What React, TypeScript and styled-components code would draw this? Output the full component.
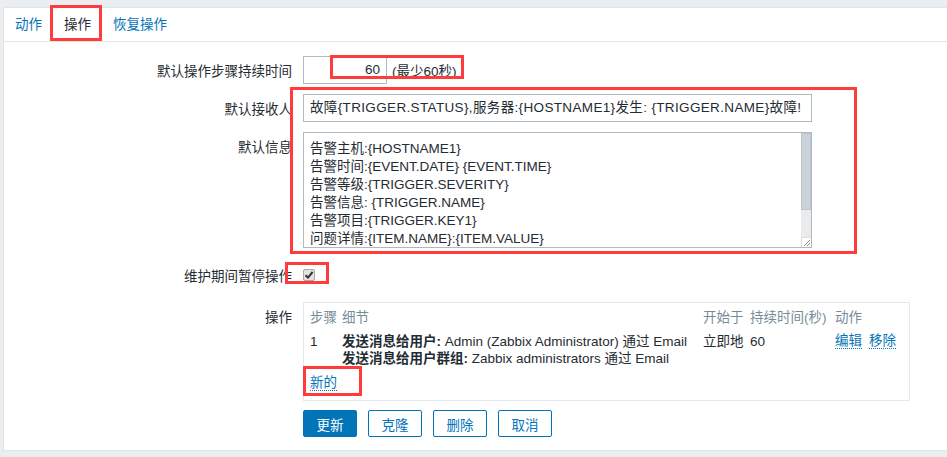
import styled, { createGlobalStyle } from 'styled-components';

const GlobalStyle = createGlobalStyle`
    body {
        margin: 0;
        background: #ebeef0;
        font-family: "Liberation Sans", "Noto Sans CJK SC", sans-serif;
        font-size: 13.5px;
        color: #1f2c33;
    }
`;

const details = [
    { label: '发送消息给用户:', text: ' Admin (Zabbix Administrator) 通过 Email' },
    { label: '发送消息给用户群组:', text: ' Zabbix administrators 通过 Email' },
];

const messageLines = [
    '告警主机:{HOSTNAME1}',
    '告警时间:{EVENT.DATE} {EVENT.TIME}',
    '告警等级:{TRIGGER.SEVERITY}',
    '告警信息: {TRIGGER.NAME}',
    '告警项目:{TRIGGER.KEY1}',
    '问题详情:{ITEM.NAME}:{ITEM.VALUE}',
];

const marks = [
    { x: 50, y: 5, w: 52, h: 36 },
    { x: 330, y: 55, w: 134, h: 24 },
    { x: 290, y: 87, w: 567, h: 167 },
    { x: 285, y: 262, w: 44, h: 22 },
    { x: 303, y: 366, w: 59, h: 30 },
];

export default function App() {
    return (
        <SPage>
            <GlobalStyle />
            <SPanel>
                <STabs>
                    <STab>动作</STab>
                    <STab active>操作</STab>
                    <STab>恢复操作</STab>
                </STabs>
                <SForm>
                    <SLabel>默认操作步骤持续时间</SLabel>
                    <SField>
                        <SInput width={84} align="right">60</SInput>
                        <SHint>(最少60秒)</SHint>
                    </SField>

                    <SLabel>默认接收人</SLabel>
                    <SField>
                        <SInput width={509} spread>
                            故障{'{TRIGGER.STATUS}'},服务器:{'{HOSTNAME1}'}发生: {'{TRIGGER.NAME}'}故障!
                        </SInput>
                    </SField>

                    <SLabel top>默认信息</SLabel>
                    <SField>
                        <STextArea>
                            <STextLines>
                                {messageLines.map((line) => (
                                    <div key={line}>{line}</div>
                                ))}
                            </STextLines>
                            <SScroll>
                                <SThumb />
                                <STrack />
                                <SGrip>
                                    <svg width="9" height="9" viewBox="0 0 9 9">
                                        <path d="M8 2 L2 8 M8 5 L5 8" stroke="#888" strokeWidth="1" />
                                    </svg>
                                </SGrip>
                            </SScroll>
                        </STextArea>
                    </SField>

                    <SLabel>维护期间暂停操作</SLabel>
                    <SField tall>
                        <SCheck>
                            <svg width="10" height="10" viewBox="0 0 10 10">
                                <path d="M1.5 5.2 L4 7.6 L8.6 2" stroke="#333" strokeWidth="2" fill="none" />
                            </svg>
                        </SCheck>
                    </SField>

                    <SLabel top>操作</SLabel>
                    <SField>
                        <SOpBox>
                            <STable>
                                <colgroup>
                                    <col style={{ width: 32 }} />
                                    <col style={{ width: 361 }} />
                                    <col style={{ width: 47 }} />
                                    <col style={{ width: 85 }} />
                                    <col />
                                </colgroup>
                                <thead>
                                    <tr>
                                        <STh>步骤</STh>
                                        <STh>细节</STh>
                                        <STh>开始于</STh>
                                        <STh>持续时间(秒)</STh>
                                        <STh>动作</STh>
                                    </tr>
                                </thead>
                                <tbody>
                                    <tr>
                                        <STd>1</STd>
                                        <STd>
                                            {details.map((d) => (
                                                <div key={d.label}>
                                                    <b>{d.label}</b>
                                                    {d.text}
                                                </div>
                                            ))}
                                        </STd>
                                        <STd>立即地</STd>
                                        <STd>60</STd>
                                        <STd>
                                            <SLinks>
                                                <SLink>编辑</SLink>
                                                <SLink>移除</SLink>
                                            </SLinks>
                                        </STd>
                                    </tr>
                                </tbody>
                            </STable>
                            <SNewRow>
                                <SLink>新的</SLink>
                            </SNewRow>
                        </SOpBox>
                    </SField>

                    <span />
                    <SButtons>
                        <SButton primary>更新</SButton>
                        <SButton>克隆</SButton>
                        <SButton>删除</SButton>
                        <SButton>取消</SButton>
                    </SButtons>
                </SForm>
            </SPanel>
            {marks.map((m, i) => (
                <SMark key={i} style={{ left: m.x, top: m.y, width: m.w, height: m.h }} />
            ))}
        </SPage>
    );
}

const SPage = styled.div`
    position: relative;
    width: 947px;
    height: 457px;
    overflow: hidden;
    padding: 7px 0 0 3px;
    box-sizing: border-box;
`;

const SPanel = styled.div`
    height: 444px;
    box-sizing: border-box;
    background: #fff;
    border: 1px solid #dfe4e7;
    border-right: none;
`;

const STabs = styled.div`
    display: flex;
    height: 33px;
    align-items: center;
    border-bottom: 1px solid #e3e6e8;
`;

const STab = styled.div<{ active?: boolean }>`
    padding: 0 11px;
    color: ${(p) => (p.active ? '#1f2c33' : '#0275b8')};
    line-height: 31px;
`;

const SForm = styled.div`
    display: grid;
    grid-template-columns: 288px 1fr;
    column-gap: 11px;
    row-gap: 10px;
    padding-top: 14px;
`;

const SLabel = styled.div<{ top?: boolean }>`
    text-align: right;
    display: flex;
    justify-content: flex-end;
    align-items: ${(p) => (p.top ? 'flex-start' : 'center')};
    padding-top: ${(p) => (p.top ? '4px' : '0')};
    white-space: nowrap;
`;

const SField = styled.div<{ tall?: boolean }>`
    display: flex;
    align-items: center;
    min-height: ${(p) => (p.tall ? '34px' : '24px')};
`;

const SInput = styled.div<{ width: number; align?: string; spread?: boolean }>`
    width: ${(p) => p.width}px;
    height: 28px;
    box-sizing: border-box;
    border: 1px solid #acbbc3;
    padding: 0 6px;
    line-height: 26px;
    text-align: ${(p) => p.align ?? 'left'};
    letter-spacing: ${(p) => (p.spread ? '0.35px' : 'normal')};
    white-space: nowrap;
    overflow: hidden;
`;

const SHint = styled.span`
    margin-left: 5px;
`;

const STextArea = styled.div`
    width: 509px;
    height: 116px;
    box-sizing: border-box;
    border: 1px solid #acbbc3;
    display: flex;
    overflow: hidden;
`;

const STextLines = styled.div`
    flex: 1;
    padding: 7px 6px 0;
    line-height: 18px;
`;

const SScroll = styled.div`
    width: 10px;
    display: flex;
    flex-direction: column;
`;

const SThumb = styled.div`
    height: 77px;
    background: #cbd3d9;
    border: 1px solid #bcc5cc;
    box-sizing: border-box;
`;

const STrack = styled.div`
    flex: 1;
    background: #ebebeb;
`;

const SGrip = styled.div`
    height: 10px;
    background: #fff;
    border-top: 1px solid #dcdcdc;
    border-left: 1px solid #dcdcdc;
    box-sizing: border-box;
    display: flex;
    align-items: flex-end;
    justify-content: flex-end;
`;

const SCheck = styled.span`
    width: 12px;
    height: 12px;
    box-sizing: border-box;
    border: 1px solid #a9a9a9;
    border-radius: 2px;
    background: #e2e2e2;
    display: flex;
    align-items: center;
    justify-content: center;
`;

const SOpBox = styled.div`
    width: 607px;
    box-sizing: border-box;
    border: 1px solid #e4e7e9;
    padding: 4px 6px 9px;
`;

const STable = styled.table`
    border-collapse: collapse;
    width: 100%;
    table-layout: fixed;
`;

const STh = styled.th`
    text-align: left;
    font-weight: normal;
    color: #768d99;
    padding: 2px 0 7px;
    line-height: 17px;
    white-space: nowrap;
`;

const STd = styled.td`
    vertical-align: top;
    padding: 0;
    line-height: 17px;
    white-space: nowrap;
    b {
        font-weight: bold;
    }
`;

const SLinks = styled.div`
    display: flex;
    gap: 7px;
`;

const SLink = styled.span`
    color: #0275b8;
    border-bottom: 1px dotted #0275b8;
    line-height: 15px;
    display: inline-block;
`;

const SNewRow = styled.div`
    padding-top: 8px;
`;

const SButtons = styled.div`
    display: flex;
    gap: 11px;
    margin-top: -1px;
`;

const SButton = styled.button<{ primary?: boolean }>`
    width: 54px;
    height: 27px;
    font-family: inherit;
    font-size: 13.5px;
    border: 1px solid #0275b8;
    border-radius: 2px;
    background: ${(p) => (p.primary ? '#0275b8' : '#fff')};
    color: ${(p) => (p.primary ? '#fff' : '#0275b8')};
    padding: 0;
`;

const SMark = styled.div`
    position: absolute;
    border: 3px solid #ff3b3b;
    box-sizing: border-box;
    pointer-events: none;
`;
